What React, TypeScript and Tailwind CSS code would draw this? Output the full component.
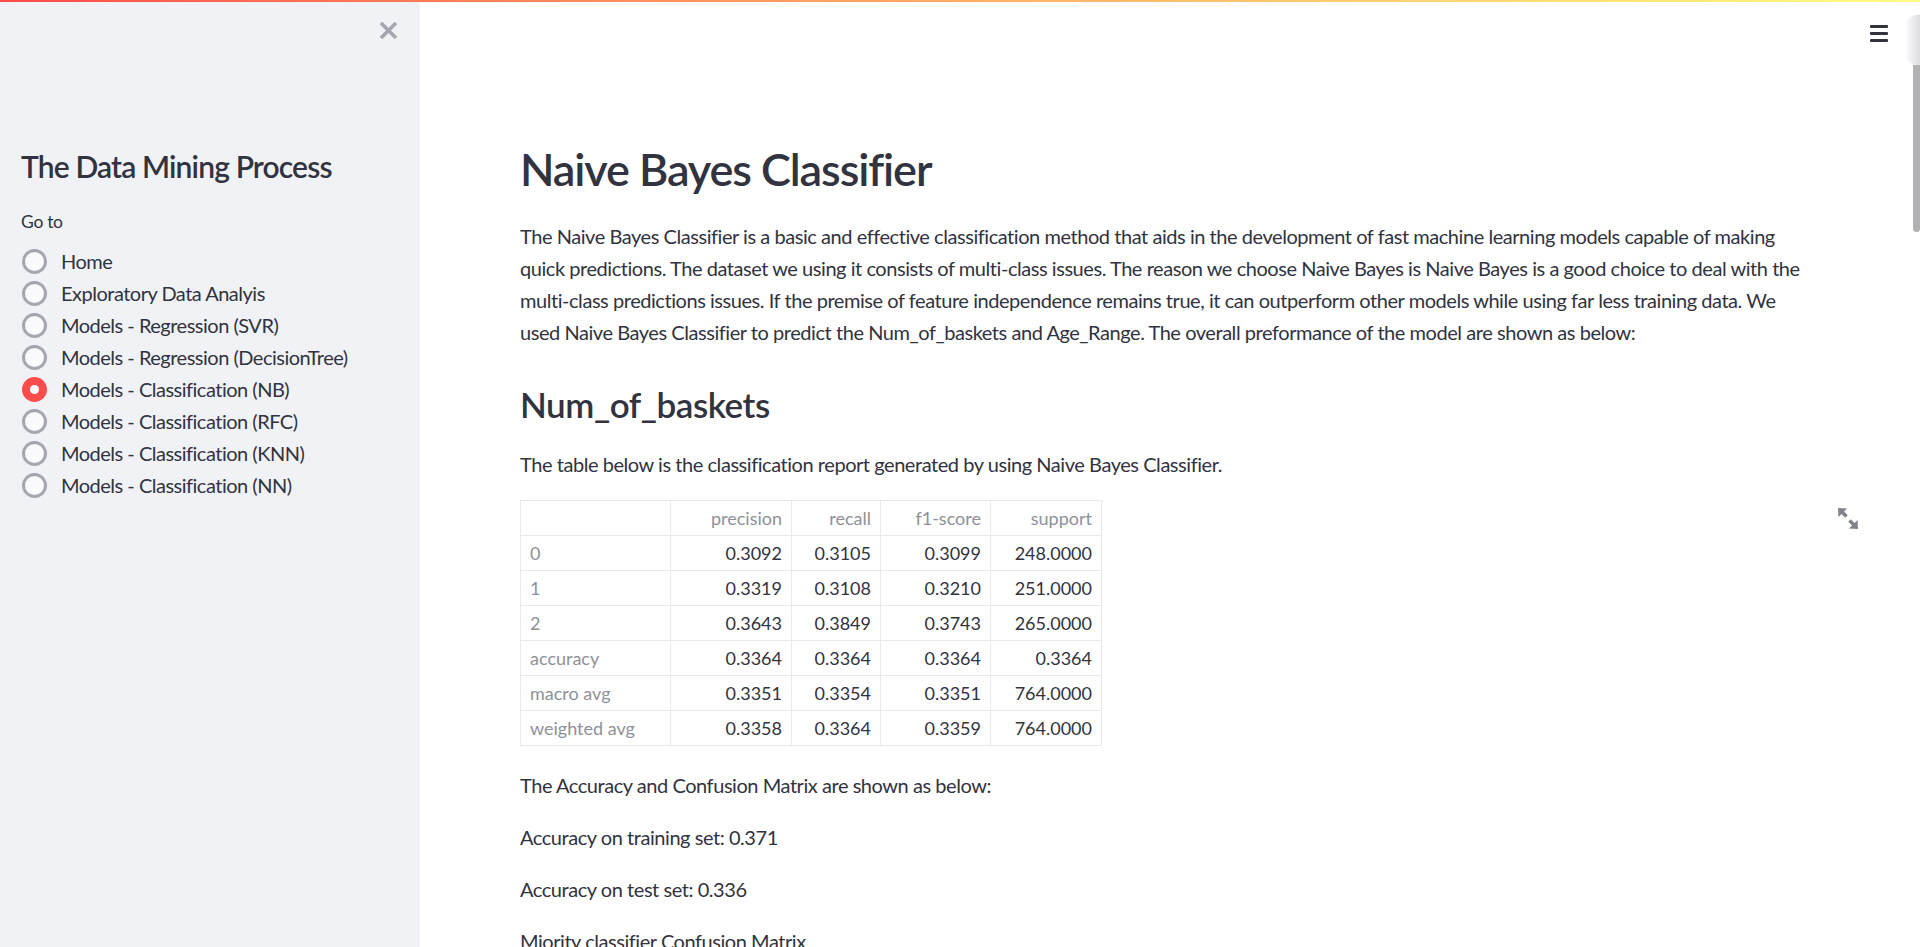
import React from "react";

const font = { fontFamily: '"Source Sans Pro", Lato, "Liberation Sans", sans-serif' };

const navItems = [
  "Home",
  "Exploratory Data Analyis",
  "Models - Regression (SVR)",
  "Models - Regression (DecisionTree)",
  "Models - Classification (NB)",
  "Models - Classification (RFC)",
  "Models - Classification (KNN)",
  "Models - Classification (NN)",
];

const rows: [string, string, string, string, string][] = [
  ["0", "0.3092", "0.3105", "0.3099", "248.0000"],
  ["1", "0.3319", "0.3108", "0.3210", "251.0000"],
  ["2", "0.3643", "0.3849", "0.3743", "265.0000"],
  ["accuracy", "0.3364", "0.3364", "0.3364", "0.3364"],
  ["macro avg", "0.3351", "0.3354", "0.3351", "764.0000"],
  ["weighted avg", "0.3358", "0.3364", "0.3359", "764.0000"],
];

function Radio({ label, selected }: { label: string; selected?: boolean }) {
  return (
    <div className="flex items-center h-[32px] pl-[22px]">
      {selected ? (
        <div className="w-[25px] h-[25px] rounded-full bg-[#ff4b4b] flex items-center justify-center shrink-0">
          <div className="w-[9px] h-[9px] rounded-full bg-white" />
        </div>
      ) : (
        <div className="w-[25px] h-[25px] rounded-full border-[3px] border-[#a5a7ae] bg-[#fafafc] shrink-0" />
      )}
      <span className="ml-[14px] text-[20px] text-[#31333f] leading-[32px] whitespace-nowrap tracking-[-0.5px]">{label}</span>
    </div>
  );
}

function ExpandIcon() {
  return (
    <svg width="20" height="21" viewBox="0 0 20 21" fill="#808289">
      <polygon points="0,0 9,0.5 0.5,9" />
      <line x1="3" y1="3" x2="8.5" y2="8.5" stroke="#808289" strokeWidth="3.5" />
      <polygon points="20,21 11,20.5 19.5,12" />
      <line x1="17" y1="18" x2="11.5" y2="12.5" stroke="#808289" strokeWidth="3.5" />
    </svg>
  );
}

export default function App() {
  const colW = ["w-[150px]", "w-[121px]", "w-[89px]", "w-[110px]", "w-[111px]"];
  const p = "text-[20px] leading-[32px] tracking-[-0.45px]";
  return (
    <div className="relative flex w-full h-[947px] overflow-hidden bg-white" style={font}>
      <div className="absolute top-0 left-0 right-0 h-[2px] bg-gradient-to-r from-[#ff4b4b] to-[#fffd80] z-10" />

      {/* Sidebar */}
      <aside className="relative w-[420px] shrink-0 bg-[#f0f2f6] flex flex-col">
        <div className="flex justify-end pt-[21px] pr-[22px] h-[140px] shrink-0">
          <svg width="19" height="19" viewBox="0 0 19 19">
            <path d="M2 2 L17 17 M17 2 L2 17" stroke="#a3a6ae" strokeWidth="3.6" strokeLinecap="butt" />
          </svg>
        </div>
        <h2 className="pl-[21px] text-[30px] font-semibold text-[#31333f] leading-[54px] -mt-[1px] tracking-[-0.85px] shrink-0">The Data Mining Process</h2>
        <div className="pl-[21px] mt-[17px] text-[17.5px] text-[#31333f] leading-[24px] tracking-[-0.3px] shrink-0">Go to</div>
        <div className="mt-[11px] flex flex-col shrink-0">
          {navItems.map((n) => (
            <Radio key={n} label={n} selected={n === "Models - Classification (NB)"} />
          ))}
        </div>
      </aside>

      {/* Main */}
      <main className="relative flex-1 flex min-w-0">
        <div className="flex-1 flex flex-col min-w-0">
          <div className="h-[68px] shrink-0 flex justify-end items-start pt-[25px] pr-[25px]">
            <div className="flex flex-col gap-[4px] w-[18px]">
              <div className="h-[3px] bg-[#31333f] rounded-[1px]" />
              <div className="h-[3px] bg-[#31333f] rounded-[1px]" />
              <div className="h-[3px] bg-[#31333f] rounded-[1px]" />
            </div>
          </div>
          <div className="pl-[100px] pr-[100px] flex flex-col text-[#31333f] shrink-0">
            <h1 className="mt-[74px] text-[45px] font-semibold leading-[54px] tracking-[-1.1px]">Naive Bayes Classifier</h1>
            <p className={`mt-[24px] ${p}`}>
              The Naive Bayes Classifier is a basic and effective classification method that aids in the development of fast machine learning models capable of making
              <br />
              quick predictions. The dataset we using it consists of multi-class issues. The reason we choose Naive Bayes is Naive Bayes is a good choice to deal with the
              <br />
              multi-class predictions issues. If the premise of feature independence remains true, it can outperform other models while using far less training data. We
              <br />
              used Naive Bayes Classifier to predict the Num_of_baskets and Age_Range. The overall preformance of the model are shown as below:
            </p>
            <h2 className="mt-[35px] text-[35px] font-semibold leading-[42px] tracking-[-0.45px]">Num_of_baskets</h2>
            <p className={`mt-[23px] ${p}`}>The table below is the classification report generated by using Naive Bayes Classifier.</p>
            <div className="relative mt-[20px]">
              <table className="border-collapse text-[18px] leading-[24px]">
                <thead>
                  <tr className="h-[35px]">
                    {["", "precision", "recall", "f1-score", "support"].map((h, i) => (
                      <th key={i} className={`${colW[i]} border border-[#e6e9ef] px-[9px] font-normal text-right text-[#8f9198]`}>{h}</th>
                    ))}
                  </tr>
                </thead>
                <tbody>
                  {rows.map((r) => (
                    <tr key={r[0]} className="h-[35px]">
                      {r.map((c, i) => (
                        <td
                          key={i}
                          className={`${colW[i]} border border-[#e6e9ef] px-[9px] ${i === 0 ? "text-left text-[#8f9198]" : "text-right text-[#31333f]"}`}
                        >
                          {c}
                        </td>
                      ))}
                    </tr>
                  ))}
                </tbody>
              </table>
              <div className="absolute top-[8px] right-[-45px]">
                <ExpandIcon />
              </div>
            </div>
            <p className={`mt-[23px] ${p}`}>The Accuracy and Confusion Matrix are shown as below:</p>
            <p className={`mt-[20px] ${p}`}>Accuracy on training set: 0.371</p>
            <p className={`mt-[20px] ${p}`}>Accuracy on test set: 0.336</p>
            <p className={`mt-[20px] ${p}`}>Miority classifier Confusion Matrix</p>
          </div>
        </div>
        <div className="relative w-[7px] shrink-0 flex flex-col">
          <div className="mt-[65px] h-[167px] bg-[#b1b1b6] rounded-b-[4px]" />
        </div>
        <div className="absolute right-0 top-[15px] w-[15px] h-[50px] bg-gradient-to-r from-white to-[#d4d4d8] rounded-tl-[12px] rounded-bl-[12px] opacity-80" />
      </main>
    </div>
  );
}
